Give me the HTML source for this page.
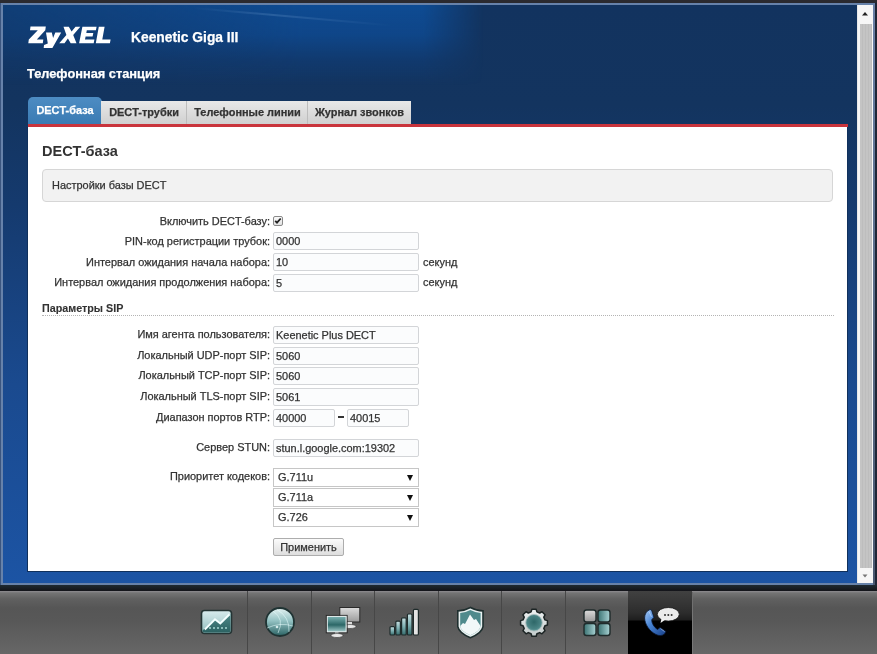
<!DOCTYPE html>
<html><head><meta charset="utf-8">
<style>
*{margin:0;padding:0;box-sizing:border-box}
html,body{width:877px;height:654px;overflow:hidden;background:#2b2a2f;font-family:"Liberation Sans",sans-serif}
#wrap{position:absolute;left:0;top:0;width:877px;height:654px;will-change:transform;overflow:hidden;background:#2b2a2f;-webkit-text-stroke:0.25px}
.abs{position:absolute}
#frame{position:absolute;left:1px;top:3px;width:874px;height:582px;background:#6782aa}
#main{position:absolute;left:3px;top:5px;width:854px;height:578px;background:linear-gradient(to bottom,#12335f 0px,#13345f 100px,#153a6e 200px,#1a4a8f 380px,#1c54a4 578px);overflow:hidden}
#glow{position:absolute;left:0;top:0;width:500px;height:85px;background:linear-gradient(to bottom,rgba(14,78,152,0.9) 0px,rgba(14,76,150,0.75) 30px,rgba(14,70,140,0.35) 55px,rgba(14,70,140,0) 80px);-webkit-mask-image:linear-gradient(to right,rgba(0,0,0,0.45) 0px,rgba(0,0,0,0.7) 150px,#000 300px,#000 420px,transparent 480px)}
#streak{position:absolute;left:190px;top:2px;width:200px;height:2px;background:linear-gradient(to right,rgba(160,200,240,0),rgba(160,200,240,0.18) 40%,rgba(160,200,240,0));transform:rotate(5deg);transform-origin:0 0}
#sb{position:absolute;left:857px;top:5px;width:16px;height:578px;background:#f6f6f6;border-left:1px solid #e8e8e8}
#sbtrack{position:absolute;left:2px;top:19px;width:12px;height:544px;background:repeating-linear-gradient(to right,#c4c4c4 0px,#c4c4c4 2px,#bdbdbd 2px,#bdbdbd 3px)}
.t{position:absolute;white-space:nowrap;font-size:10.95px;color:#333;line-height:13px}
.lbl{position:absolute;white-space:nowrap;font-size:10.95px;color:#333;right:607px;text-align:right;line-height:13px}
.inp{position:absolute;height:18px;border:1px solid #d3d5d8;border-radius:2px;background:#fbfcfd;font-size:10.95px;color:#333;padding-left:2px;line-height:16px;white-space:nowrap;overflow:hidden}
.sel{position:absolute;left:273px;width:146px;height:19px;border:1px solid #c6c6c6;background:#fff;font-size:10.95px;color:#333;padding-left:4px;line-height:17px}
.sel:after{content:"";position:absolute;right:5px;top:6px;border-left:3.5px solid transparent;border-right:3.5px solid transparent;border-top:6px solid #111}
.tab{position:absolute;top:101px;height:23px;background:linear-gradient(#e8e8e8,#d0d0d0);font-size:10.95px;font-weight:bold;color:#333;line-height:23px;text-align:center;border-left:1px solid #bdbdbd}
#toolbar{position:absolute;left:0;top:591px;width:877px;height:63px;background:linear-gradient(#8e8c90 0px,#747474 2px,#606060 8px,#565656 17px,#585858 30px,#676767 63px)}
.sep{position:absolute;top:591px;width:1px;height:63px;background:#474747}
</style></head><body><div id="wrap">
<div id="frame"></div><div class="abs" style="left:873px;top:5px;width:2px;height:580px;background:linear-gradient(#6a80a6,#5a6c88 300px,#4a5870)"></div><div class="abs" style="left:875px;top:3px;width:2px;height:588px;background:#1f2636"></div><div class="abs" style="left:0;top:3px;width:1px;height:582px;background:#3b5680"></div>
<div id="main">
  <div id="glow"></div><div id="streak"></div>
</div>
<svg class="abs" style="left:0;top:0" width="877" height="60">
  <g fill="#fff">
    <polygon points="30.5,26.6 45.8,26.6 45.3,30.3 36.8,39.6 43.3,39.6 42.8,43.3 28.3,43.3 28.8,39.6 37.8,30.3 30.0,30.3"/>
    <polygon points="46.0,32.4 51.8,32.4 53.1,38.1 55.3,32.4 61.2,32.4 52.4,47.9 43.7,47.9 44.0,45.1 47.8,43.6"/>
    <polygon points="63.5,26.7 68.8,26.7 71.6,31.5 75.5,26.7 80.3,26.7 73.2,35.0 76.5,43.3 70.7,43.3 67.9,38.5 64.5,43.3 59.2,43.3 66.4,35.0"/>
    <polygon points="82.4,26.7 96.6,26.7 95.9,30.2 86.8,30.2 86.3,32.9 93.3,32.9 92.6,36.5 85.6,36.5 85.0,39.5 94.4,39.5 93.7,43.3 79.1,43.3"/>
    <polygon points="98.8,26.7 104.6,26.7 102.3,39.5 110.6,39.5 109.9,43.3 95.8,43.3"/>
  </g>
</svg>
<div class="abs" style="left:131px;top:30px;font-size:13.8px;font-weight:bold;color:#fff;white-space:nowrap;line-height:16px">Keenetic Giga III</div>
<div class="abs" style="left:27px;top:66px;font-size:12.8px;font-weight:bold;color:#fff;white-space:nowrap;line-height:15px">Телефонная станция</div>

<div class="abs" style="left:28px;top:97px;width:74px;height:27px;border-radius:5px 5px 0 0;background:linear-gradient(#4d8cc3,#3a7bb3);font-size:10.95px;font-weight:bold;color:#fff;line-height:27px;text-align:center">DECT-база</div>
<div class="tab" style="left:101px;width:86px;border-left:none">DECT-трубки</div>
<div class="tab" style="left:186px;width:122px">Телефонные линии</div>
<div class="tab" style="left:307px;width:104px">Журнал звонков</div>
<div class="abs" style="left:28px;top:124px;width:820px;height:3px;background:#c9343c"></div>
<div class="abs" style="left:27px;top:127px;width:821px;height:445px;background:#fff;border:1px solid #10305c;border-top:none"></div>
<div class="abs" style="left:42px;top:143px;font-size:14.5px;font-weight:bold;color:#333;-webkit-text-stroke:0;white-space:nowrap;line-height:16px">DECT-база</div>
<div class="abs" style="left:42px;top:169px;width:791px;height:33px;background:#f2f2f2;border:1px solid #d6d6d6;border-radius:4px"></div>
<div class="t" style="left:52px;top:179px">Настройки базы DECT</div>

<div class="lbl" style="top:215px">Включить DECT-базу:</div>
<div class="abs" style="left:273px;top:216px;width:10px;height:10px;border:1px solid #8a8a8a;border-radius:2px;background:linear-gradient(#fafafa,#e2e2e2)"></div>
<svg class="abs" style="left:273px;top:216px" width="10" height="10"><path d="M2.2 4.8 L4 6.7 L7.7 2.5" stroke="#222" stroke-width="1.8" fill="none"/></svg>

<div class="lbl" style="top:235px">PIN-код регистрации трубок:</div>
<div class="inp" style="left:273px;top:232px;width:146px">0000</div>
<div class="lbl" style="top:256px">Интервал ожидания начала набора:</div>
<div class="inp" style="left:273px;top:253px;width:146px">10</div>
<div class="t" style="left:423px;top:256px">секунд</div>
<div class="lbl" style="top:276px">Интервал ожидания продолжения набора:</div>
<div class="inp" style="left:273px;top:274px;width:146px">5</div>
<div class="t" style="left:423px;top:276px">секунд</div>

<div class="abs" style="left:42px;top:302px;font-size:10.75px;font-weight:bold;color:#333;-webkit-text-stroke:0.1px;white-space:nowrap;line-height:13px">Параметры SIP</div>
<div class="abs" style="left:42px;top:315px;width:792px;height:1px;border-top:1px dotted #b4b4b4"></div>

<div class="lbl" style="top:328px">Имя агента пользователя:</div>
<div class="inp" style="left:273px;top:326px;width:146px">Keenetic Plus DECT</div>
<div class="lbl" style="top:349px">Локальный UDP-порт SIP:</div>
<div class="inp" style="left:273px;top:347px;width:146px">5060</div>
<div class="lbl" style="top:369px">Локальный TCP-порт SIP:</div>
<div class="inp" style="left:273px;top:367px;width:146px">5060</div>
<div class="lbl" style="top:390px">Локальный TLS-порт SIP:</div>
<div class="inp" style="left:273px;top:388px;width:146px">5061</div>
<div class="lbl" style="top:411px">Диапазон портов RTP:</div>
<div class="inp" style="left:273px;top:409px;width:62px">40000</div>
<div class="abs" style="left:338px;top:416px;width:6px;height:2px;background:#333"></div>
<div class="inp" style="left:347px;top:409px;width:62px">40015</div>

<div class="lbl" style="top:441px">Сервер STUN:</div>
<div class="inp" style="left:273px;top:439px;width:146px">stun.l.google.com:19302</div>

<div class="lbl" style="top:470px">Приоритет кодеков:</div>
<div class="sel" style="top:468px">G.711u</div>
<div class="sel" style="top:488px">G.711a</div>
<div class="sel" style="top:508px">G.726</div>

<div class="abs" style="left:273px;top:538px;width:71px;height:18px;border:1px solid #adadad;border-radius:2px;background:linear-gradient(#fbfbfb,#dedede);font-size:10.95px;color:#333;text-align:center;line-height:16px">Применить</div>

<div id="sb"><div id="sbtrack"></div></div>
<svg class="abs" style="left:857px;top:5px" width="16" height="578">
  <polygon points="5,10.5 11,10.5 8,7" fill="#222"/>
  <polygon points="5.5,569.5 10.5,569.5 8,572.5" fill="#777"/>
</svg>

<div class="abs" style="left:0;top:585px;width:877px;height:6px;background:linear-gradient(#1e2a32,#141419)"></div>
<div id="toolbar"></div>
<div class="sep" style="left:247px"></div>
<div class="sep" style="left:311px"></div>
<div class="sep" style="left:374px"></div>
<div class="sep" style="left:438px"></div>
<div class="sep" style="left:501px"></div>
<div class="sep" style="left:565px"></div>
<div class="abs" style="left:628px;top:591px;width:64px;height:63px;background:linear-gradient(#414141 0px,#2c2c2c 22px,#1e1e1e 29px,#000 30px,#000 63px)"></div><div class="abs" style="left:692px;top:592px;width:1px;height:62px;background:linear-gradient(#6a6a6a,#7a7a7a 30px,#787878)"></div>
<svg class="abs" style="left:0;top:0" width="877" height="654">
  <defs>
    <linearGradient id="teal" x1="0" y1="0" x2="0" y2="1"><stop offset="0" stop-color="#c8e0e2"/><stop offset="0.5" stop-color="#7fb0b3"/><stop offset="1" stop-color="#356c6d"/></linearGradient>
    <linearGradient id="tealH" x1="0" y1="0" x2="1" y2="0"><stop offset="0" stop-color="#3b7373"/><stop offset="1" stop-color="#a9d3d4"/></linearGradient>
    <linearGradient id="scr" x1="0" y1="0" x2="0" y2="1"><stop offset="0" stop-color="#7fb5b5"/><stop offset="0.55" stop-color="#2c6767"/><stop offset="1" stop-color="#a8cfcf"/></linearGradient>
    <linearGradient id="gray" x1="0" y1="0" x2="0" y2="1"><stop offset="0" stop-color="#dcdcdc"/><stop offset="1" stop-color="#9a9a9a"/></linearGradient>
    <radialGradient id="globe" cx="0.45" cy="0.3" r="0.7"><stop offset="0" stop-color="#dff0f0"/><stop offset="0.5" stop-color="#7fb2b4"/><stop offset="1" stop-color="#2c6263"/></radialGradient>
    <linearGradient id="chartbg" x1="0" y1="0" x2="0" y2="1"><stop offset="0" stop-color="#d8ecee"/><stop offset="1" stop-color="#8fbcbd"/></linearGradient>
    <linearGradient id="chartdk" x1="0" y1="0" x2="0" y2="1"><stop offset="0" stop-color="#4e8a8a"/><stop offset="1" stop-color="#2c6262"/></linearGradient>
    <linearGradient id="globe2" x1="0" y1="0" x2="0" y2="1"><stop offset="0" stop-color="#e4f2f2"/><stop offset="0.45" stop-color="#95c3c4"/><stop offset="1" stop-color="#2a6263"/></linearGradient>
    <linearGradient id="gearbody" x1="0" y1="0" x2="0" y2="1"><stop offset="0" stop-color="#eef2f2"/><stop offset="1" stop-color="#c4cccc"/></linearGradient>
    <radialGradient id="gearin" cx="0.5" cy="0.45" r="0.6"><stop offset="0" stop-color="#2e6768"/><stop offset="0.7" stop-color="#4a8485"/><stop offset="1" stop-color="#7fb0b0"/></radialGradient>
    <linearGradient id="blue" x1="0" y1="0" x2="1" y2="1"><stop offset="0" stop-color="#a8ccf6"/><stop offset="0.4" stop-color="#4a86d6"/><stop offset="1" stop-color="#173f88"/></linearGradient>
  </defs>
  <!-- chart -->
  <rect x="201.5" y="610.5" width="30" height="23" rx="3" fill="url(#chartbg)" stroke="#243434" stroke-width="1.6"/>
  <path d="M202.5,630.5 L215,618.8 L220.3,623.2 L230.5,613.5 L230.5,630 Q230.5,632.5 228,632.5 L205,632.5 Q202.5,632.5 202.5,630 Z" fill="url(#chartdk)"/>
  <g fill="#9fd0cc" opacity="0.8"><rect x="209" y="627" width="2" height="2"/><rect x="213" y="627" width="2" height="2"/><rect x="217" y="627" width="2" height="2"/><rect x="221" y="627" width="2" height="2"/><rect x="225" y="627" width="2" height="2"/></g>
  <g stroke="#cfe3e4" stroke-width="0.6" opacity="0.6"><line x1="209" y1="612" x2="209" y2="622"/><line x1="215" y1="612" x2="215" y2="617"/><line x1="221" y1="612" x2="221" y2="620"/><line x1="227" y1="612" x2="227" y2="615"/></g>
  <polyline points="204.8,629.5 215,619.3 220.3,623.5 229.6,614.2" fill="none" stroke="#f4ffff" stroke-width="2"/>
  <!-- globe -->
  <circle cx="280" cy="622" r="14" fill="url(#globe2)" stroke="#1f3333" stroke-width="1.8"/>
  <path d="M273 611 Q285 619 278 633 M277 609.5 Q290 617 289 632 M267 628 Q280 622 293 626" fill="none" stroke="#e8ffff" stroke-width="0.9" opacity="0.6"/>
  <circle cx="277" cy="627" r="1.3" fill="#f0ffff" opacity="0.8"/>
  <!-- monitors -->
  <rect x="339.8" y="607.5" width="20" height="14.5" fill="url(#gray)" stroke="#2a2a2a" stroke-width="1"/>
  <rect x="347" y="622" width="5" height="3" fill="#ddd"/>
  <ellipse cx="350" cy="626.5" rx="6" ry="2" fill="#e8e8e8" stroke="#333" stroke-width="0.6"/>
  <rect x="327.2" y="616.3" width="19" height="15.6" fill="url(#scr)" stroke="#e8f0f0" stroke-width="1.2"/>
  <rect x="326.2" y="615.3" width="21" height="17.6" fill="none" stroke="#222" stroke-width="0.8"/>
  <rect x="335" y="632.5" width="3.5" height="2.5" fill="#ddd"/>
  <ellipse cx="337" cy="635.5" rx="6" ry="2" fill="#e8e8e8" stroke="#333" stroke-width="0.6"/>
  <!-- signal bars -->
  <g stroke="#1e2b2b" stroke-width="1.2">
    <rect x="390" y="626.6" width="4.6" height="8.4" rx="1" fill="url(#teal)"/>
    <rect x="395.8" y="621.2" width="4.6" height="13.8" rx="1" fill="url(#teal)"/>
    <rect x="401.6" y="617.8" width="4.6" height="17.2" rx="1" fill="url(#teal)"/>
    <rect x="407.4" y="614" width="4.6" height="21" rx="1" fill="url(#teal)"/>
    <rect x="413.4" y="609.4" width="5" height="25.6" rx="1" fill="#e4e4e4"/>
  </g>
  <!-- shield -->
  <path d="M470.4,607.5 Q477,611 483,610.9 L483,626.6 Q482,633 470.4,637.7 Q459,633 457.8,626.6 L457.8,610.9 Q464,611 470.4,607.5 Z" fill="#e9f2f2" stroke="#1f2f2f" stroke-width="1.6"/>
  <path d="M470.4,610 Q475.5,612.8 480.6,613 L480.6,626 Q479.6,631.5 470.4,635.3 Q461.2,631.5 460.2,626 L460.2,613 Q465.3,612.8 470.4,610 Z" fill="#4f8a8c"/>
  <path d="M460.2,626 L463,623 L465,624 L470,614.5 L474,620 L476,619 L480.6,626 Q479.6,631.5 470.4,635.3 Q461.2,631.5 460.2,626 Z" fill="#f2f8f8"/>
  <!-- gear -->
  <g transform="translate(534,622.8)">
    <path d="M-2.91,-10.92 L-2.17,-13.43 L2.17,-13.43 L2.91,-10.92 L5.67,-9.78 L7.96,-11.03 L11.03,-7.96 L9.78,-5.67 L10.92,-2.91 L13.43,-2.17 L13.43,2.17 L10.92,2.91 L9.78,5.67 L11.03,7.96 L7.96,11.03 L5.67,9.78 L2.91,10.92 L2.17,13.43 L-2.17,13.43 L-2.91,10.92 L-5.67,9.78 L-7.96,11.03 L-11.03,7.96 L-9.78,5.67 L-10.92,2.91 L-13.43,2.17 L-13.43,-2.17 L-10.92,-2.91 L-9.78,-5.67 L-11.03,-7.96 L-7.96,-11.03 L-5.67,-9.78 Z" fill="url(#gearbody)" stroke="#1c2424" stroke-width="1.5" stroke-linejoin="round"/>
    <circle r="8.3" fill="url(#gearin)" stroke="#a9bdbd" stroke-width="0.8"/>
  </g>
  <!-- grid -->
  <g stroke="#1f2b2b" stroke-width="1.4">
    <rect x="584" y="610" width="12" height="12" rx="2.5" fill="url(#gray)"/>
    <rect x="598" y="610" width="12" height="12" rx="2.5" fill="url(#tealH)"/>
    <rect x="584" y="623.5" width="12" height="12" rx="2.5" fill="url(#tealH)"/>
    <rect x="598" y="623.5" width="12" height="12" rx="2.5" fill="url(#tealH)"/>
  </g>
  <!-- phone -->
  <path d="M650,609.5 C647,610.5 644.5,614 644.6,618 C644.8,624 649,631 656,634.5 C659,636 662,636 664.5,634 L666,631.5 L660,627.5 L657.5,629.5 C654,627 651.5,623 651.8,619.5 L654,617.5 L651.5,610 Z" fill="url(#blue)" stroke="#0a1730" stroke-width="0.8"/>
  <path d="M649,611.5 L651.5,617" stroke="#cfe0ff" stroke-width="0.8" opacity="0.7"/>
  <path d="M660.5,628.5 L664.5,631.5" stroke="#cfe0ff" stroke-width="0.8" opacity="0.7"/>
  <ellipse cx="668.3" cy="614.3" rx="11" ry="6.8" fill="#ececec" stroke="#111" stroke-width="0.8"/>
  <path d="M661.5,618.5 L660.5,623 L665.5,619.5 Z" fill="#f4f4f4"/>
  <g fill="#333"><circle cx="665" cy="615" r="1"/><circle cx="668.3" cy="615" r="1"/><circle cx="671.6" cy="615" r="1"/></g>
</svg>
</div></body></html>
